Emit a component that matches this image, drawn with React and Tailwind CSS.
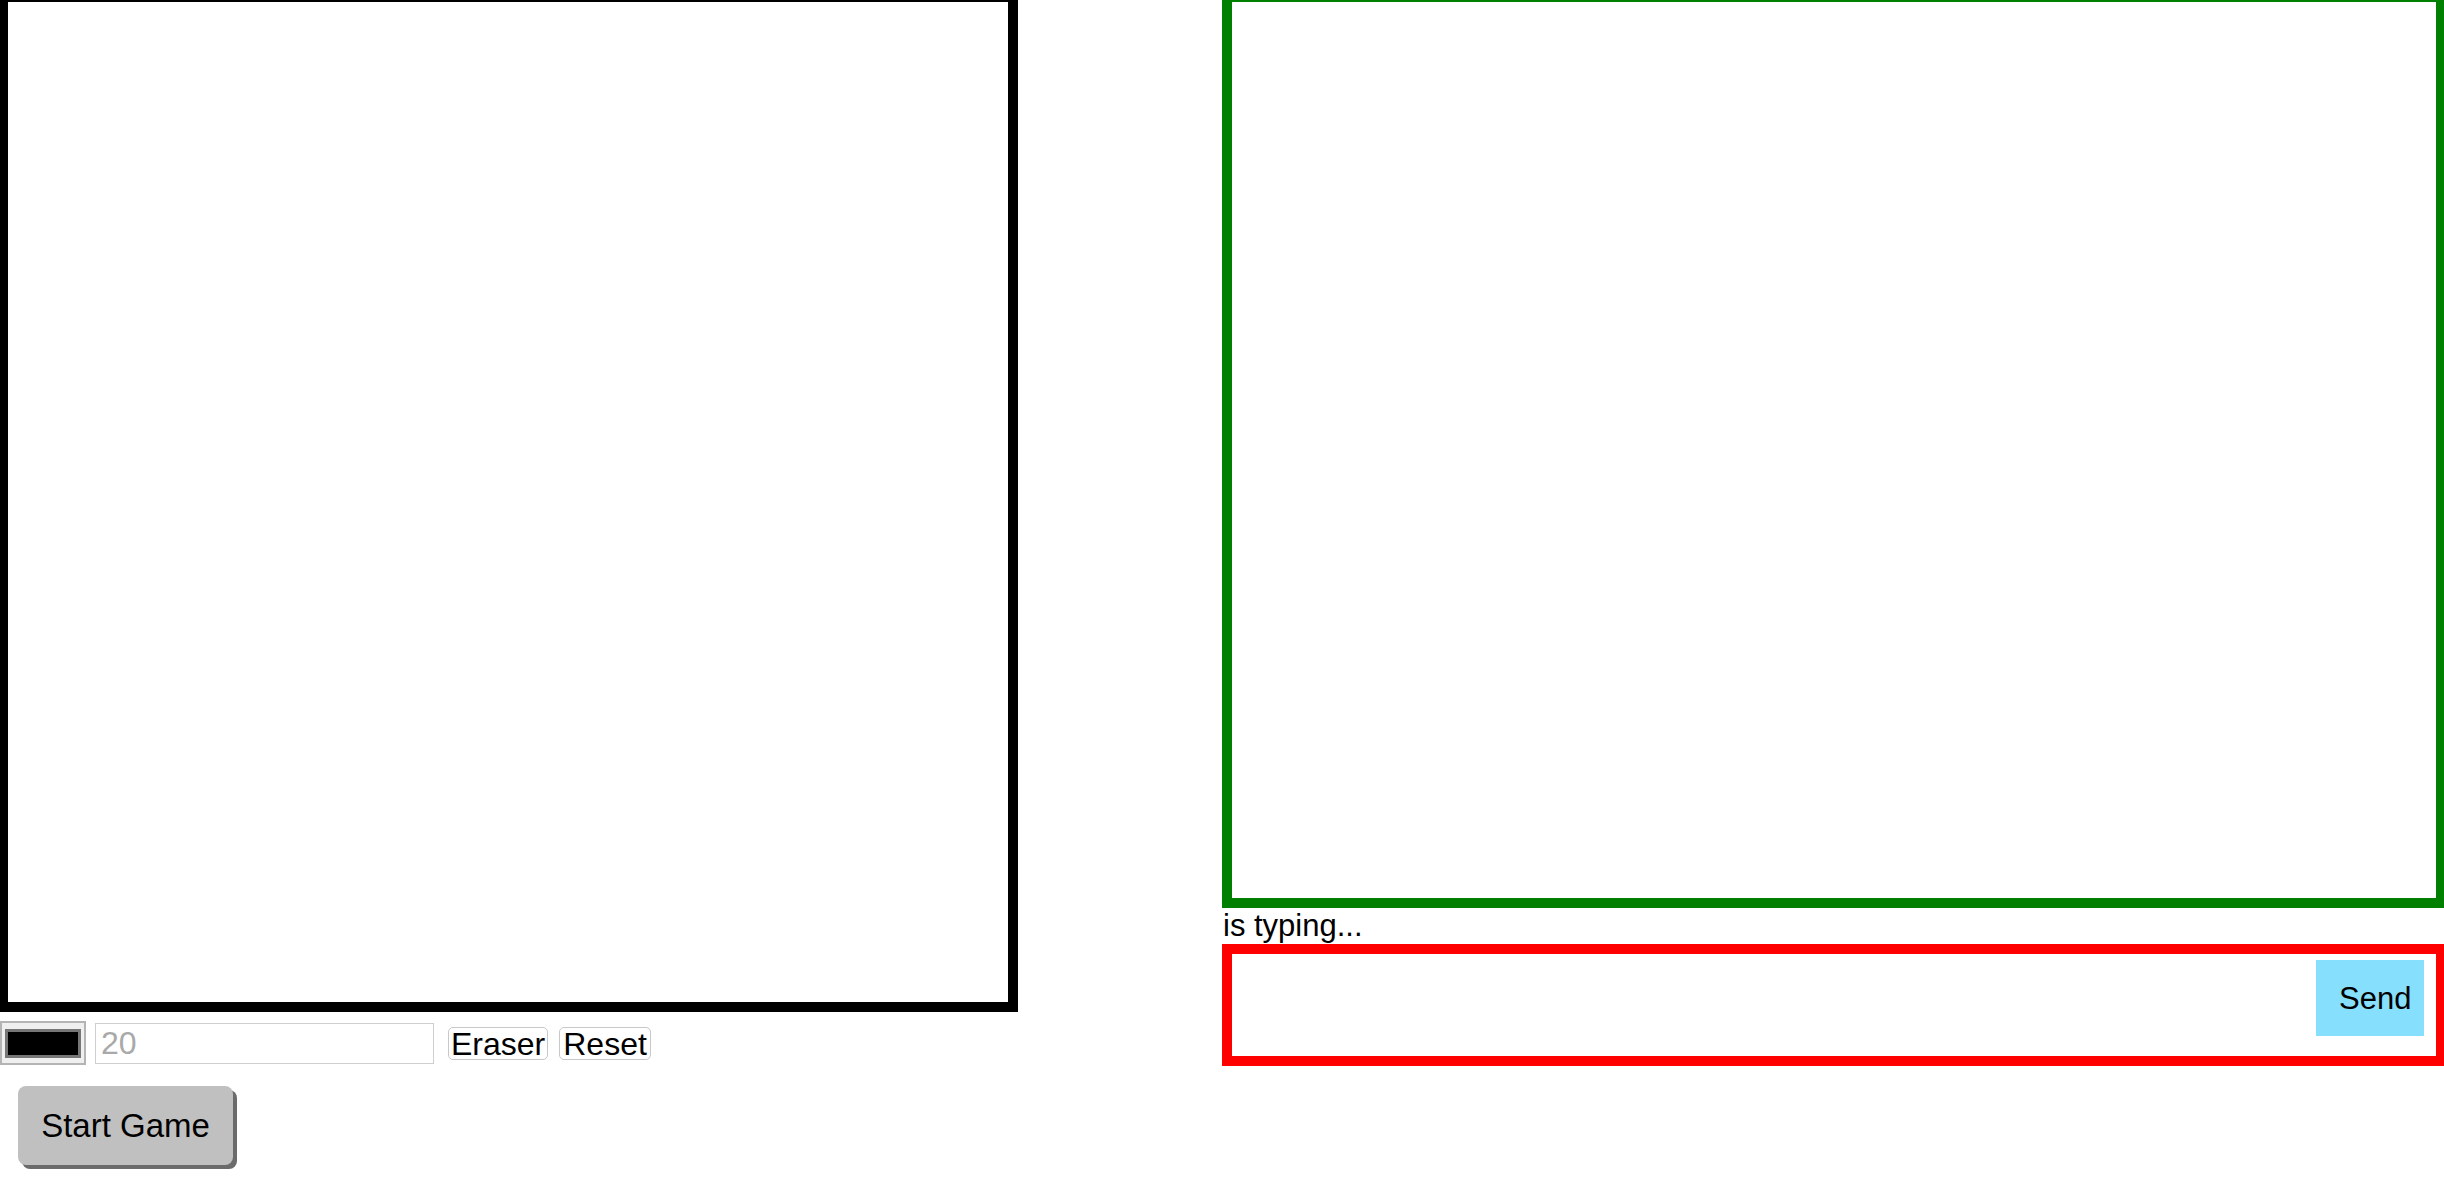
import { useState } from 'react';

export default function App() {
    const [message, setMessage] = useState('');
    const [size, setSize] = useState('');

    return (
        <div className="w-[2444px] h-[1182px] overflow-hidden bg-white font-['Liberation_Sans',Arial,sans-serif] text-black">
            {/* page is shown scrolled a little, so shift everything up-left */}
            <div className="flex items-start -ml-[2px] -mt-[8px]">
                {/* drawing side */}
                <div className="flex flex-col w-[1020px] shrink-0">
                    <div className="w-[1020px] h-[1020px] border-[10px] border-black bg-white"></div>

                    <div className="flex items-center h-[44px] mt-[9px] ml-[2px]">
                        <div className="w-[86px] h-[44px] border-2 border-[#b4b4b4] bg-[#efefef] flex items-center justify-center">
                            <div className="w-[76px] h-[29px] bg-black border-[3px] border-[#767676]"></div>
                        </div>
                        <input
                            value={size}
                            onChange={(e) => setSize(e.target.value)}
                            placeholder="20"
                            className="ml-[9px] w-[339px] h-[41px] border border-[#cfcfcf] pl-[5px] text-[32px] leading-none outline-none placeholder:text-[#a9a9a9]"
                        />
                        <button className="ml-[14px] h-[33px] px-[2px] border border-[#c8c8c8] rounded-[5px] bg-white text-[32px] leading-none">
                            Eraser
                        </button>
                        <button className="ml-[11px] h-[33px] px-[3px] border border-[#c8c8c8] rounded-[5px] bg-white text-[32px] leading-none">
                            Reset
                        </button>
                    </div>

                    <div>
                        <button className="ml-[20px] mt-[21px] w-[215px] h-[79px] bg-[#c0c0c0] rounded-[8px] shadow-[4px_4px_0_#6b6b6b] text-[33px] leading-none">
                            Start Game
                        </button>
                    </div>
                </div>

                {/* chat side */}
                <div className="ml-[204px] w-[1224px] shrink-0 flex flex-col">
                    <div className="h-[916px] border-[10px] border-[#008000]"></div>
                    <div className="h-[36px] text-[31px] leading-[36px] pl-[1px]">is typing...</div>
                    <div className="h-[122px] border-[10px] border-[#ff0000] flex items-start">
                        <input
                            value={message}
                            onChange={(e) => setMessage(e.target.value)}
                            className="flex-1 h-full outline-none text-[31px] px-2"
                        />
                        <button className="mt-[6px] mr-[12px] w-[108px] h-[76px] bg-[#86dffd] text-[31px] leading-none text-left pl-[23px]">
                            Send
                        </button>
                    </div>
                </div>
            </div>
        </div>
    );
}
